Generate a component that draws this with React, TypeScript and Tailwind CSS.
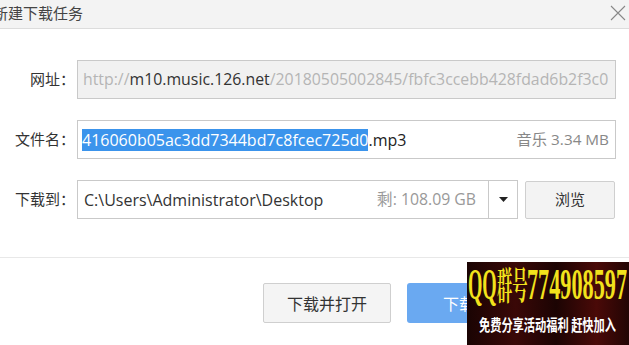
import React from 'react';

const cjk = "font-['Microsoft_YaHei','Noto_Sans_CJK_SC',sans-serif]";
const latin = "font-['Open_Sans','Noto_Sans_CJK_SC',sans-serif]";
const serif = "font-['Liberation_Serif','Noto_Serif_CJK_SC','Noto_Sans_CJK_SC',serif]";

function Label({ text }: { text: string }) {
  return (
    <div className={`w-[77px] shrink-0 text-right pr-[2px] text-[15px] text-[#333] ${cjk}`}>
      {text}
    </div>
  );
}

export default function App() {
  return (
    <div className="relative w-[629px] h-[345px] overflow-hidden bg-white">
      {/* Title bar */}
      <div className="flex items-center justify-between h-[29px] bg-[#f3f3f3] border-b border-[#dcdcdc]">
        <span className={`-ml-[7px] -mt-[2px] text-[15px] text-[#444] ${cjk}`}>新建下载任务</span>
        <svg width="16" height="16" viewBox="0 0 16 16" className="mr-[3px] mt-[-3px]">
          <path d="M1 1 L15 15 M15 1 L1 15" stroke="#888" strokeWidth="1.1" fill="none" />
        </svg>
      </div>

      {/* Form */}
      <div className="flex flex-col gap-[21px] pt-[31px] pr-[13px]">
        <div className="flex items-center">
          <Label text="网址：" />
          <div className={`flex-1 h-[39px] flex items-center pl-[5px] bg-[#f1f1f1] border border-[#c9c9c9] overflow-hidden whitespace-nowrap text-[15.85px] ${latin}`}>
            <span className="text-[#b5b5b5]">http://</span>
            <span className="text-[#333]">m10.music.126.net</span>
            <span className="text-[#b5b5b5]">/20180505002845/fbfc3ccebb428fdad6b2f3c0</span>
          </div>
        </div>

        <div className="flex items-center">
          <Label text="文件名：" />
          <div className={`flex-1 h-[39px] flex items-center justify-between pl-[4px] pr-[6px] bg-white border border-[#c9c9c9] whitespace-nowrap ${latin}`}>
            <span className="text-[16px] text-[#222]">
              <span className="bg-[#3b94ec] text-white">416060b05ac3dd7344bd7c8fcec725d0</span>.mp3
            </span>
            <span className="text-[15.3px] text-[#888]">音乐 3.34 MB</span>
          </div>
        </div>

        <div className="flex items-center">
          <Label text="下载到：" />
          <div className={`w-[441px] h-[39px] flex items-stretch bg-white border border-[#c9c9c9] whitespace-nowrap ${latin}`}>
            <div className="flex-1 flex items-center justify-between pl-[6px] pr-[12px]">
              <span className="text-[16px] text-[#333]">C:\Users\Administrator\Desktop</span>
              <span className="text-[15.8px] text-[#999]">剩: 108.09 GB</span>
            </div>
            <div className="w-[29px] border-l border-[#c9c9c9] flex items-center justify-center">
              <svg width="9" height="5" viewBox="0 0 9 5">
                <path d="M0 0 L9 0 L4.5 5 Z" fill="#222" />
              </svg>
            </div>
          </div>
          <button className={`ml-[7px] w-[90px] h-[38px] rounded-[2px] bg-[#f3f3f3] border border-[#cfcfcf] text-[15px] text-[#333] ${cjk}`}>
            浏览
          </button>
        </div>
      </div>

      {/* Footer */}
      <div className="mt-[38px] border-t border-[#e8e8e8] flex justify-end gap-[16px] pt-[25px]">
        <button className={`w-[128px] h-[40px] rounded-[2px] bg-[#f4f4f4] border border-[#cfcfcf] text-[16px] text-[#333] ${cjk}`}>
          下载并打开
        </button>
        <button className={`w-[222px] h-[40px] rounded-[3px] bg-[#6aa9f1] text-left pl-[36px] text-[16px] text-white ${cjk}`}>
          下载
        </button>
      </div>

      {/* Overlay ad */}
      <div className="absolute left-[467px] top-[262px] w-[162px] h-[83px] bg-[linear-gradient(90deg,#1a0403_0%,#3a0807_30%,#1c0403_55%,#4a0a08_80%,#220504_100%)] overflow-hidden">
        <div className={`flex items-baseline h-[42px] pt-[3px] pl-[1px] font-bold text-[#f2e21c] whitespace-nowrap leading-[40px] ${serif}`}>
          <span className="w-[29px] shrink-0">
            <span className="inline-block origin-left scale-x-[0.42] text-[44px]">QQ</span>
          </span>
          <span className="w-[30px] shrink-0">
            <span className="inline-block origin-left scale-x-[0.4] text-[38px]">群号</span>
          </span>
          <span className="w-[100px] shrink-0">
            <span className="inline-block origin-left scale-x-[0.505] text-[44px]">774908597</span>
          </span>
        </div>
        <div className={`mt-[11px] ml-[12px] w-[200px] origin-left scale-x-[0.7] text-[16px] font-bold leading-[18px] text-white whitespace-nowrap ${cjk}`}>
          免费分享活动福利 赶快加入
        </div>
      </div>
    </div>
  );
}
